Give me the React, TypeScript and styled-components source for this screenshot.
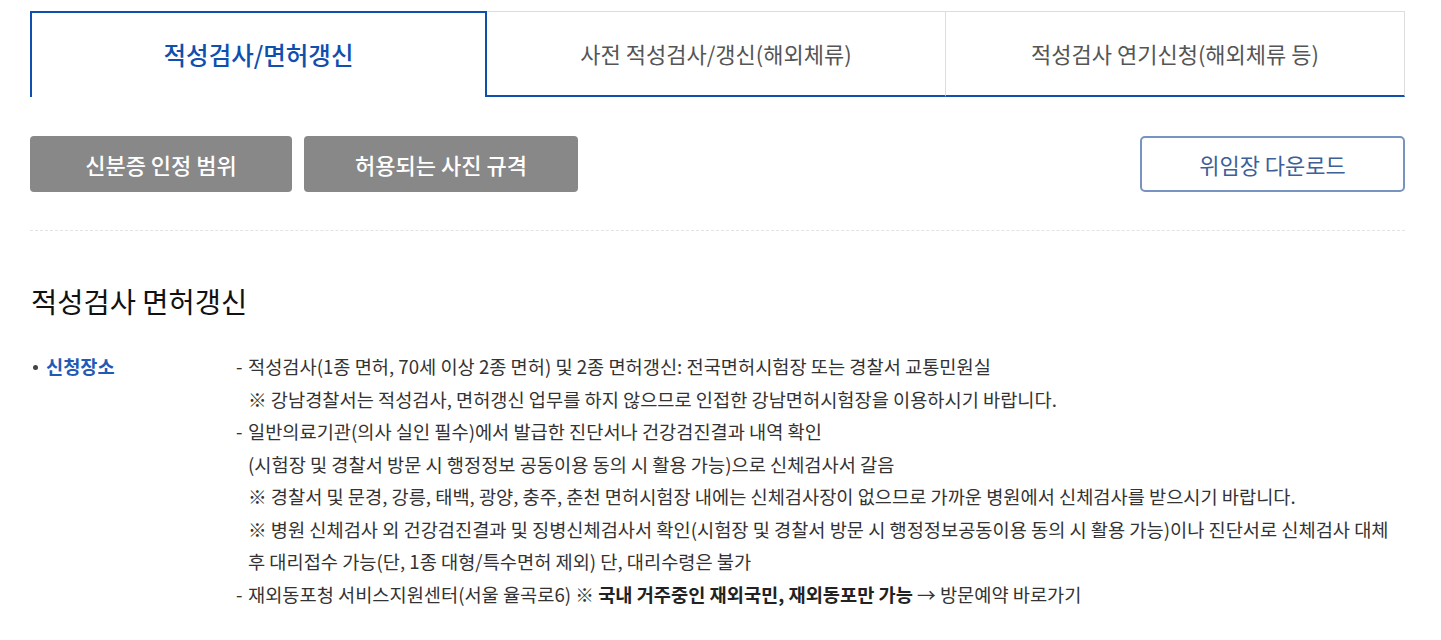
import React from "react";
import styled, { createGlobalStyle } from "styled-components";

const GlobalStyle = createGlobalStyle`
  body {
    margin: 0;
    background: #fff;
    font-family: "Noto Sans CJK KR", "Noto Sans", sans-serif;
    color: #333;
  }
  * { box-sizing: border-box; }
`;

const BLUE = "#0f4fae";

const Page = styled.div`
  width: 1375px;
  margin: 0 36px 0 30px;
  padding-top: 11px;
`;

const TabBar = styled.div`
  display: grid;
  grid-template-columns: 457px 1fr 1fr;
`;

const Tab = styled.div<{ $active?: boolean }>`
  height: 86px;
  display: flex;
  align-items: center;
  justify-content: center;
  padding-bottom: 2px;
  font-size: ${(p) => (p.$active ? "24.5px" : "22px")};
  font-weight: ${(p) => (p.$active ? 500 : 400)};
  color: ${(p) => (p.$active ? BLUE : "#555")};
  ${(p) =>
    p.$active
      ? `border: 2px solid ${BLUE}; border-bottom: 0;`
      : `border-top: 1px solid #ddd; border-right: 1px solid #ddd; border-bottom: 2px solid ${BLUE};`}
`;

const ButtonRow = styled.div`
  display: flex;
  justify-content: space-between;
  align-items: center;
  margin-top: 39px;
`;

const ButtonGroup = styled.div`
  display: flex;
  gap: 12px;
`;

const GrayButton = styled.button<{ $width: number }>`
  width: ${(p) => p.$width}px;
  height: 56px;
  border: 0;
  border-radius: 4px;
  background: #888;
  color: #fff;
  font-family: inherit;
  font-size: 22px;
  font-weight: 500;
`;

const OutlineButton = styled.button`
  width: 265px;
  height: 56px;
  border: 2px solid #7793bf;
  border-radius: 5px;
  background: #fff;
  color: #3e5f98;
  font-family: inherit;
  font-size: 22px;
  font-weight: 400;
`;

const Divider = styled.hr`
  margin: 38px 0 0;
  border: 0;
  border-top: 1px dashed #e3e3e3;
`;

const Heading = styled.h2`
  margin: 50px 0 0 1px;
  font-size: 28.5px;
  font-weight: 400;
  color: #111;
  line-height: 40px;
`;

const InfoRow = styled.div`
  display: grid;
  grid-template-columns: 204px 1fr;
  margin-top: 29px;
  font-size: 18.67px;
  line-height: 32.5px;
`;

const Label = styled.div`
  position: relative;
  padding-left: 16px;
  color: #1f5bb5;
  font-weight: 700;

  &::before {
    content: "";
    position: absolute;
    left: 3px;
    top: 15px;
    width: 5px;
    height: 5px;
    border-radius: 50%;
    background: #444;
  }
`;

const Item = styled.div`
  position: relative;
  padding-left: 14px;
  color: #333;

  &::before {
    content: "-";
    position: absolute;
    left: 2px;
    top: 0;
  }
`;

const Note = styled.div``;

const Strong = styled.strong`
  font-weight: 700;
  color: #222;
`;

export default function App() {
  return (
    <>
      <GlobalStyle />
      <Page>
        <TabBar>
          <Tab $active>적성검사/면허갱신</Tab>
          <Tab>사전 적성검사/갱신(해외체류)</Tab>
          <Tab>적성검사 연기신청(해외체류 등)</Tab>
        </TabBar>

        <ButtonRow>
          <ButtonGroup>
            <GrayButton $width={262}>신분증 인정 범위</GrayButton>
            <GrayButton $width={274}>허용되는 사진 규격</GrayButton>
          </ButtonGroup>
          <OutlineButton>위임장 다운로드</OutlineButton>
        </ButtonRow>

        <Divider />

        <Heading>적성검사 면허갱신</Heading>

        <InfoRow>
          <Label>신청장소</Label>
          <div>
            <Item>
              적성검사(1종 면허, 70세 이상 2종 면허) 및 2종 면허갱신: 전국면허시험장 또는 경찰서 교통민원실
              <Note>※ 강남경찰서는 적성검사, 면허갱신 업무를 하지 않으므로 인접한 강남면허시험장을 이용하시기 바랍니다.</Note>
            </Item>
            <Item>
              일반의료기관(의사 실인 필수)에서 발급한 진단서나 건강검진결과 내역 확인
              <br />
              (시험장 및 경찰서 방문 시 행정정보 공동이용 동의 시 활용 가능)으로 신체검사서 갈음
              <Note>※ 경찰서 및 문경, 강릉, 태백, 광양, 충주, 춘천 면허시험장 내에는 신체검사장이 없으므로 가까운 병원에서 신체검사를 받으시기 바랍니다.</Note>
              <Note>
                ※ 병원 신체검사 외 건강검진결과 및 징병신체검사서 확인(시험장 및 경찰서 방문 시 행정정보공동이용 동의 시 활용 가능)이나 진단서로 신체검사 대체 후 대리접수 가능(단, 1종 대형/특수면허 제외) 단, 대리수령은 불가
              </Note>
            </Item>
            <Item>
              재외동포청 서비스지원센터(서울 율곡로6) ※ <Strong>국내 거주중인 재외국민, 재외동포만 가능</Strong> → 방문예약 바로가기
            </Item>
          </div>
        </InfoRow>
      </Page>
    </>
  );
}
